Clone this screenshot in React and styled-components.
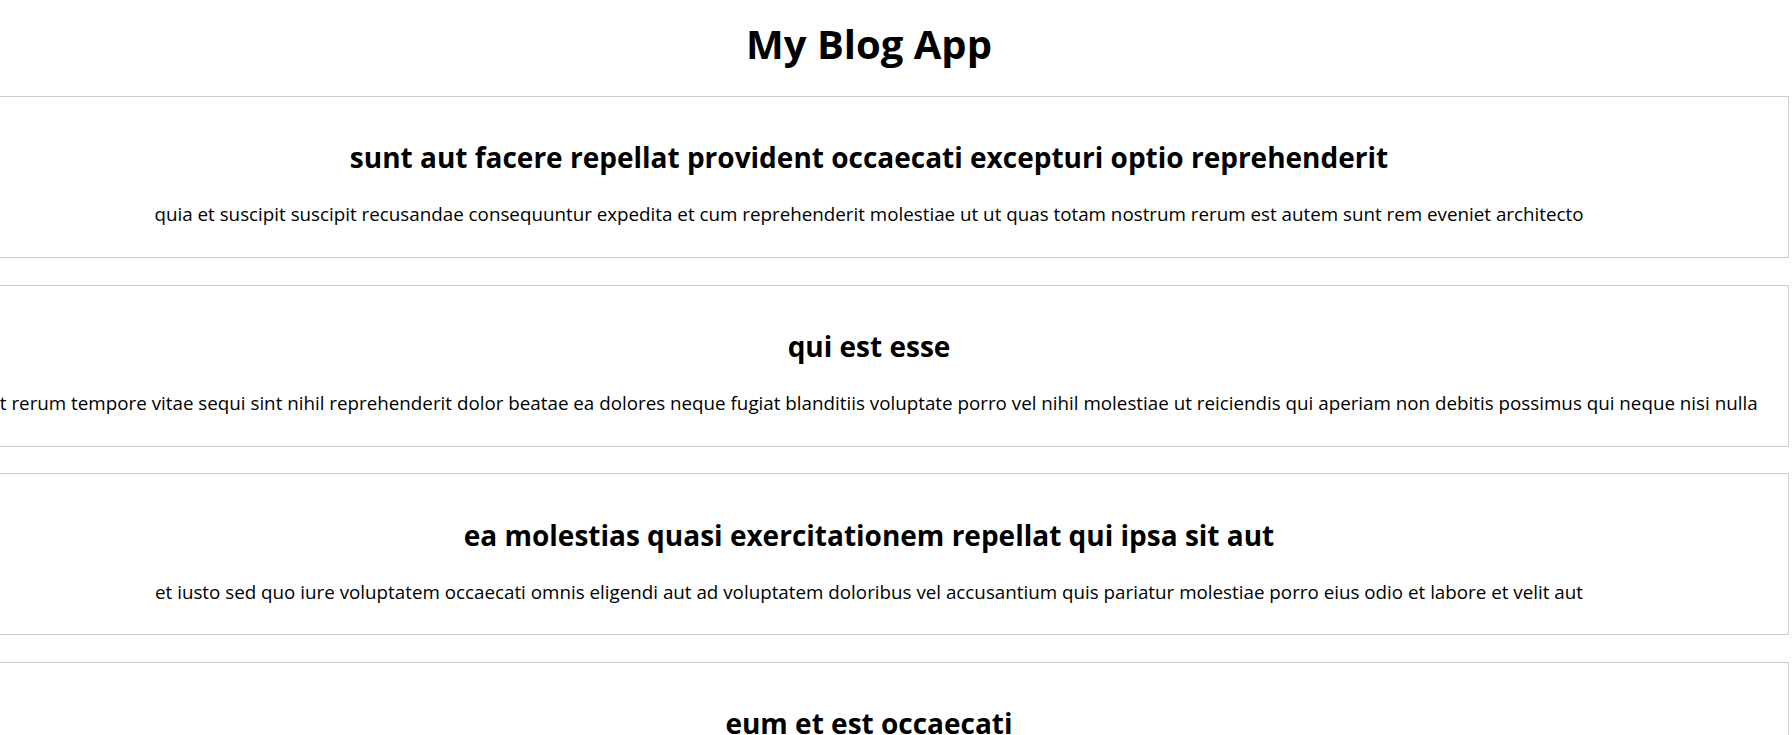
import React from 'react'
import styled, { createGlobalStyle } from 'styled-components'

const GlobalStyle = createGlobalStyle`
  body {
    margin: 0;
    background: #ffffff;
    color: #000000;
    font-family: "Open Sans", "Noto Sans", sans-serif;
    overflow-x: hidden;
  }
`

const posts = [
  {
    id: 1,
    title: 'sunt aut facere repellat provident occaecati excepturi optio reprehenderit',
    body: 'quia et suscipit suscipit recusandae consequuntur expedita et cum reprehenderit molestiae ut ut quas totam nostrum rerum est autem sunt rem eveniet architecto',
  },
  {
    id: 2,
    title: 'qui est esse',
    body: 'est rerum tempore vitae sequi sint nihil reprehenderit dolor beatae ea dolores neque fugiat blanditiis voluptate porro vel nihil molestiae ut reiciendis qui aperiam non debitis possimus qui neque nisi nulla',
  },
  {
    id: 3,
    title: 'ea molestias quasi exercitationem repellat qui ipsa sit aut',
    body: 'et iusto sed quo iure voluptatem occaecati omnis eligendi aut ad voluptatem doloribus vel accusantium quis pariatur molestiae porro eius odio et labore et velit aut',
  },
  {
    id: 4,
    title: 'eum et est occaecati',
    body: 'ullam et saepe reiciendis voluptatem adipisci sit amet autem assumenda provident rerum culpa quis hic commodi nesciunt rem tenetur doloremque ipsam iure quis sunt voluptatem rerum illo velit',
  },
  {
    id: 5,
    title: 'nesciunt quas odio',
    body: 'repudiandae veniam quaerat sunt sed alias aut fugiat sit autem sed est voluptatem omnis possimus esse voluptatibus quis est aut tenetur dolor neque',
  },
]

const Page = styled.div`
  width: 1840px;
  margin-left: -51px;
  padding-top: 17px;
`

const Title = styled.h1`
  margin: 0 0 26px;
  font-size: 40px;
  line-height: 53px;
  font-weight: 700;
  text-align: center;
`

const PostList = styled.div`
  display: flex;
  flex-direction: column;
  gap: 26.7px;
`

const Card = styled.div`
  border: 1px solid #cccccc;
  display: flex;
  flex-direction: column;
  align-items: center;
  gap: 23.9px;
  padding: 40.4px 0 28.7px;
`

const PostTitle = styled.h2`
  margin: 0;
  font-size: 28px;
  line-height: 40px;
  font-weight: 700;
  white-space: nowrap;
`

const PostBody = styled.p`
  margin: 0;
  font-size: 18.8px;
  line-height: 27px;
  white-space: nowrap;
`

const App = () => {
  return (
    <>
      <GlobalStyle />
      <Page>
        <Title>My Blog App</Title>
        <PostList>
          {posts.map((post) => (
            <Card key={post.id}>
              <PostTitle>{post.title}</PostTitle>
              <PostBody>{post.body}</PostBody>
            </Card>
          ))}
        </PostList>
      </Page>
    </>
  )
}

export default App
